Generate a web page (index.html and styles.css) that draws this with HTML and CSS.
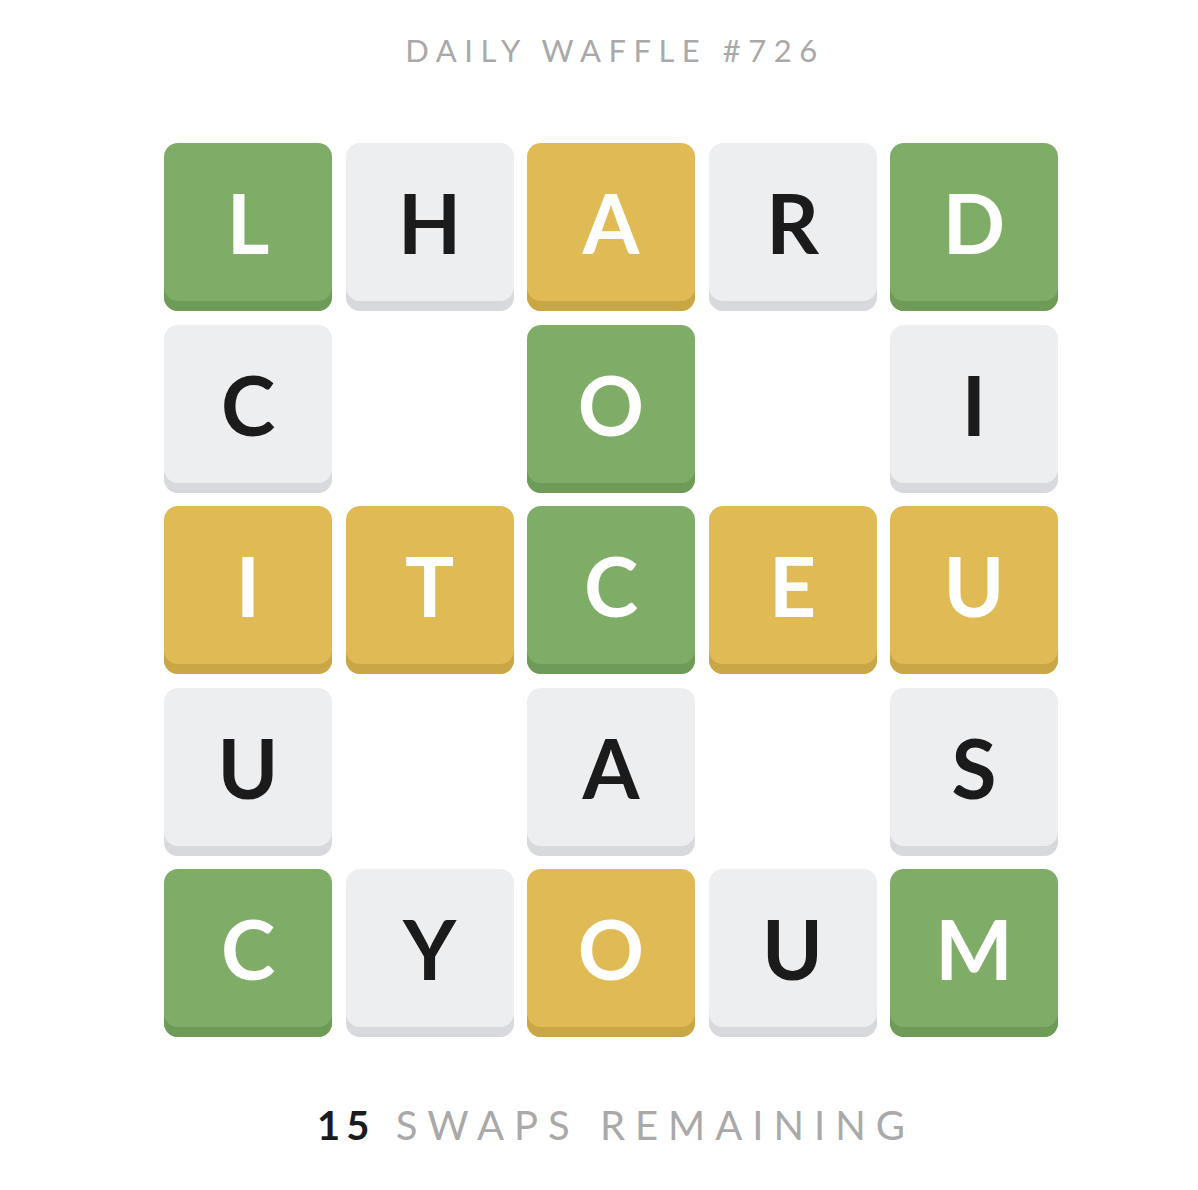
FILE: index.html
```html
<!DOCTYPE html>
<html>
<head>
<meta charset="utf-8">
<link rel="stylesheet" href="styles.css">
</head>
<body>
<main class="page">
  <h1 class="title">DAILY WAFFLE #726</h1>
  <div class="board">
    <div class="tile green">L</div>
    <div class="tile grey">H</div>
    <div class="tile yellow">A</div>
    <div class="tile grey">R</div>
    <div class="tile green">D</div>

    <div class="tile grey">C</div>
    <div class="hole"></div>
    <div class="tile green">O</div>
    <div class="hole"></div>
    <div class="tile grey">I</div>

    <div class="tile yellow">I</div>
    <div class="tile yellow">T</div>
    <div class="tile green">C</div>
    <div class="tile yellow">E</div>
    <div class="tile yellow">U</div>

    <div class="tile grey">U</div>
    <div class="hole"></div>
    <div class="tile grey">A</div>
    <div class="hole"></div>
    <div class="tile grey">S</div>

    <div class="tile green">C</div>
    <div class="tile grey">Y</div>
    <div class="tile yellow">O</div>
    <div class="tile grey">U</div>
    <div class="tile green">M</div>
  </div>
  <p class="swaps"><span class="count">15</span> <span class="label">SWAPS REMAINING</span></p>
</main>
</body>
</html>
```
FILE: styles.css
```css
html, body {
  margin: 0;
  padding: 0;
  background: #ffffff;
}
body {
  font-family: Lato, "Open Sans", sans-serif;
}
.page {
  width: 1198px;
  box-sizing: border-box;
  padding-left: 24px;
  display: flex;
  flex-direction: column;
  align-items: center;
}
.title {
  margin: 32px 0 0 0;
  font-size: 31px;
  line-height: 36px;
  font-weight: 400;
  letter-spacing: 7.5px;
  color: #a9a9a9;
  padding-left: 8px;
}
.board {
  margin-top: 75px;
  display: grid;
  grid-template-columns: repeat(5, 168px);
  grid-auto-rows: 168px;
  gap: 13.5px;
}
.tile {
  border-radius: 14px;
  display: flex;
  align-items: center;
  justify-content: center;
  padding-bottom: 10px;
  box-sizing: border-box;
  font-size: 82px;
  font-weight: 700;
  line-height: 1;
}
.green {
  background: #7fad67;
  color: #ffffff;
  box-shadow: inset 0 -10px 0 0 #6f9b58;
}
.yellow {
  background: #e0bb55;
  color: #ffffff;
  box-shadow: inset 0 -10px 0 0 #c9a646;
}
.grey {
  background: #edeef0;
  color: #1b1b1b;
  box-shadow: inset 0 -10px 0 0 #d8d9dc;
}
.swaps {
  margin: 64px 0 0 0;
  font-size: 40px;
  line-height: 48px;
  letter-spacing: 10px;
  padding-left: 10px;
}
.count {
  font-weight: 700;
  color: #1b1b1b;
  letter-spacing: 6px;
}
.label {
  color: #a9a9a9;
}
```
